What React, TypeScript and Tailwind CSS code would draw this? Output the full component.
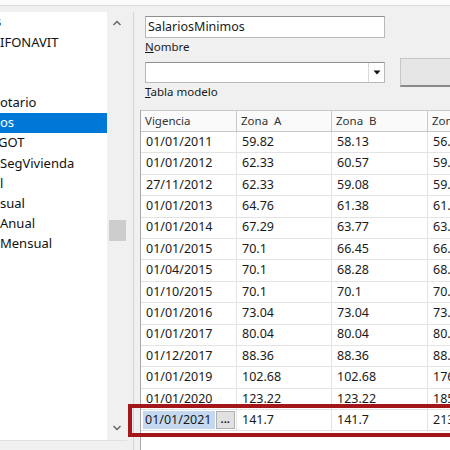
import React from 'react';

// left list: only the visible tails of the names survive the crop
const listItems = [
  { text: 's', cls: '-ml-[5px]' },
  { text: 'IFONAVIT', cls: '' },
  { text: '', cls: '' },
  { text: '', cls: '' },
  { text: 'otario', cls: '' },
  { text: 'os', cls: '', selected: true },
  { text: 'GOT', cls: '-ml-[2px]' },
  { text: 'SegVivienda', cls: '' },
  { text: 'l', cls: '' },
  { text: 'sual', cls: '' },
  { text: 'Anual', cls: '' },
  { text: 'Mensual', cls: '' },
];

const rows: [string, string, string, string][] = [
  ['01/01/2011', '59.82', '58.13', '56.70'],
  ['01/01/2012', '62.33', '60.57', '59.08'],
  ['27/11/2012', '62.33', '59.08', '59.08'],
  ['01/01/2013', '64.76', '61.38', '61.38'],
  ['01/01/2014', '67.29', '63.77', '63.77'],
  ['01/01/2015', '70.1', '66.45', '66.45'],
  ['01/04/2015', '70.1', '68.28', '68.28'],
  ['01/10/2015', '70.1', '70.1', '70.10'],
  ['01/01/2016', '73.04', '73.04', '73.04'],
  ['01/01/2017', '80.04', '80.04', '80.04'],
  ['01/12/2017', '88.36', '88.36', '88.36'],
  ['01/01/2019', '102.68', '102.68', '176.72'],
  ['01/01/2020', '123.22', '123.22', '185.56'],
];

const font = { fontFamily: '"Noto Sans", "Open Sans", sans-serif' };

const cell = 'h-[21.4px] border-b border-r border-[#e3e3e3] pl-[5px] flex items-center overflow-hidden whitespace-nowrap';

const App: React.FC = () => {
  return (
    <div style={font} className="relative w-[450px] h-[450px] overflow-hidden bg-[#f0f0f0] text-[#1a1a1a] flex flex-col">
      {/* top strip */}
      <div className="h-[6px] bg-[#fbfbfb] border-b border-[#dadada] shrink-0" />
      <div className="flex flex-1 pt-[6px]">
        {/* list box */}
        <div className="w-[127px] h-[429px] bg-white flex border-b border-[#e0e0e0] shrink-0">
          <div className="flex-1 flex flex-col overflow-hidden">
            {listItems.map((it, i) => (
              <div
                key={i}
                className={`h-[20.2px] flex items-center text-[13px] whitespace-nowrap ${it.selected ? 'bg-[#0078d7] text-white' : 'text-[#111]'}`}
              >
                <span className={it.cls}>{it.text}</span>
              </div>
            ))}
          </div>
          {/* scrollbar */}
          <div className="w-[20px] bg-[#f0f0f0] flex flex-col items-center justify-between py-[5px]">
            <svg width="10" height="8" viewBox="0 0 10 8" className="mt-[2px]">
              <path d="M1.5 6 L5 2.5 L8.5 6" fill="none" stroke="#606060" strokeWidth="1.4" />
            </svg>
            <div className="flex-1 w-full flex flex-col pt-[193px]">
              <div className="h-[21px] w-[17px] mx-auto bg-[#cdcdcd]" />
            </div>
            <svg width="10" height="8" viewBox="0 0 10 8" className="mb-[3px]">
              <path d="M1.5 2 L5 5.5 L8.5 2" fill="none" stroke="#606060" strokeWidth="1.4" />
            </svg>
          </div>
        </div>

        {/* splitter */}
        <div className="w-[13px] flex justify-center shrink-0">
          <div className="w-[1px] bg-[#d4d4d4]" />
        </div>

        {/* right panel */}
        <div className="flex-1 flex flex-col min-w-0">
          <div className="pl-[5px] pt-[4px] flex flex-col">
            <div className="w-[240px] h-[22px] bg-white border border-[#b9b9b9] border-t-[#8f8f8f] flex items-center pl-[2px] text-[12.5px]">
              SalariosMinimos
            </div>
            <div className="text-[11.5px] mt-[2px] leading-[14px]">
              <span className="underline">N</span>ombre
            </div>
            <div className="flex items-start mt-[8px]">
              <div className="w-[240px] h-[21px] bg-white border border-[#b9b9b9] border-t-[#8f8f8f] flex justify-end shrink-0">
                <div className="w-[16px] border-l border-[#d8d8d8] flex items-center justify-center">
                  <svg width="8" height="5" viewBox="0 0 8 5">
                    <path d="M0.5 0.5 L7.5 0.5 L4 4.5 Z" fill="#111" />
                  </svg>
                </div>
              </div>
              <div className="ml-[15px] -mt-[4px] -mb-[4px] w-[80px] h-[29px] bg-[#e6e6e6] border border-[#c6c6c6] border-b-[#8a8a8a] border-b-2 shrink-0" />
            </div>
            <div className="text-[11.5px] mt-[2px] leading-[14px]">
              <span className="underline">T</span>abla modelo
            </div>
          </div>

          {/* grid */}
          <div className="mt-[11px] flex-1 border-l border-[#a8a8a8] bg-white overflow-hidden text-[12.5px]">
            <div className="w-[400px] grid grid-cols-[96px_95px_96px_96px]">
              {['Vigencia', 'Zona  A', 'Zona  B', 'Zona  C'].map((h) => (
                <div
                  key={h}
                  className="h-[22px] border-t border-b border-r border-[#c8c8c8] bg-[#fafafa] pl-[4px] flex items-center text-[11.5px] text-[#333] whitespace-pre"
                >
                  {h}
                </div>
              ))}
              {rows.map((r) =>
                r.map((v, j) => (
                  <div key={r[0] + j} className={cell}>
                    {v}
                  </div>
                ))
              )}
              {/* row being edited */}
              <div className="h-[21.4px] border-b border-r border-[#e3e3e3] flex items-center pl-[2px] pr-[1px] gap-[1px]">
                <span className="bg-[#c4d9ef] h-[18px] flex items-center pl-[2px] pr-[3px]">01/01/2021</span>
                <span className="h-[18px] flex-1 bg-[#e1e1e1] border border-[#b0b0b0] flex items-center justify-center text-[11px] font-bold leading-none pb-[3px]">
                  ...
                </span>
              </div>
              <div className={cell}>141.7</div>
              <div className={cell}>141.7</div>
              <div className={cell}>213.39</div>
            </div>
          </div>
        </div>
      </div>

      {/* red highlight annotation */}
      <div className="absolute left-[128px] top-[404px] w-[360px] h-[33px] border-[4px] border-[#a3161a]" />
    </div>
  );
};

export default App;
